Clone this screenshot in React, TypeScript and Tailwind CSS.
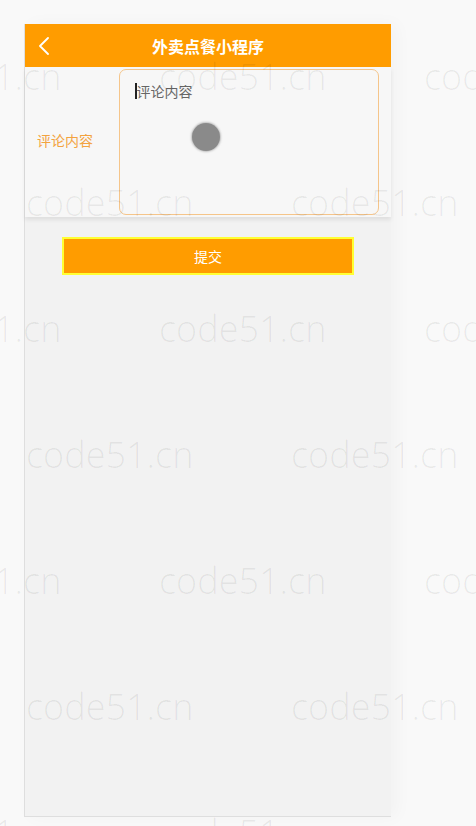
const marks: { left: number; top: number }[] = [];
for (let row = 0; row < 7; row++) {
  const baseline = 91 + row * 126;
  const xs = row % 2 === 0 ? [-106, 159, 424] : [26, 291];
  xs.forEach((left) => marks.push({ left, top: baseline - 32 }));
}

export default function App() {
  return (
    <div className="relative h-[826px] w-full overflow-hidden bg-[#f9f9f9] pl-[24px] pt-[24px] font-['Noto_Sans_CJK_SC',sans-serif]">
      <div className="flex h-[793px] w-[367px] flex-col border-b border-l border-[#dedede] bg-[#f2f2f2] shadow-[6px_0_16px_rgba(0,0,0,0.03)]">
        <header className="relative flex h-[43px] items-center justify-center bg-[#ff9c00]">
          <svg className="absolute left-[13px] top-[13px]" width="12" height="18" viewBox="0 0 12 18" fill="none">
            <polyline points="10,1 2,9 10,17" stroke="white" strokeWidth="1.8" strokeLinecap="round" strokeLinejoin="round" />
          </svg>
          <h1 className="text-[16px] font-bold text-white">外卖点餐小程序</h1>
        </header>

        <div className="flex h-[150px] items-center bg-[#f7f7f7] shadow-[0_3px_4px_rgba(0,0,0,0.08)]">
          <label className="-mt-[4px] w-[94px] pl-[12px] text-[14px] text-[#f3a340]">评论内容</label>
          <div className="relative h-[146px] w-[260px] rounded-[7px] border border-[#f5c58a] bg-[#f7f7f7] px-[15px] pt-[11px]">
            <div className="flex items-center text-[14px] leading-[20px] text-[#666]">
              <span className="h-[16px] w-[1.5px] bg-[#222]" />
              评论内容
            </div>
            <span className="absolute left-[72px] top-[53px] h-[28px] w-[28px] rounded-full bg-[#8a8a8a] shadow-[0_0_2px_1px_rgba(150,150,150,0.6)]" />
          </div>
        </div>

        <button className="ml-[37px] mt-[20px] flex h-[38px] w-[292px] items-center justify-center border-2 border-[#ffff33] bg-[#ff9c00] text-[14px] text-white">
          提交
        </button>
      </div>

      <div className="pointer-events-none absolute inset-0">
        {marks.map((m, i) => (
          <span
            key={i}
            className="absolute whitespace-nowrap font-['Open_Sans',sans-serif] text-[36px] font-light leading-[36px] text-[rgba(0,0,0,0.065)]"
            style={{ left: m.left, top: m.top }}
          >
            code51.cn
          </span>
        ))}
      </div>
    </div>
  );
}
